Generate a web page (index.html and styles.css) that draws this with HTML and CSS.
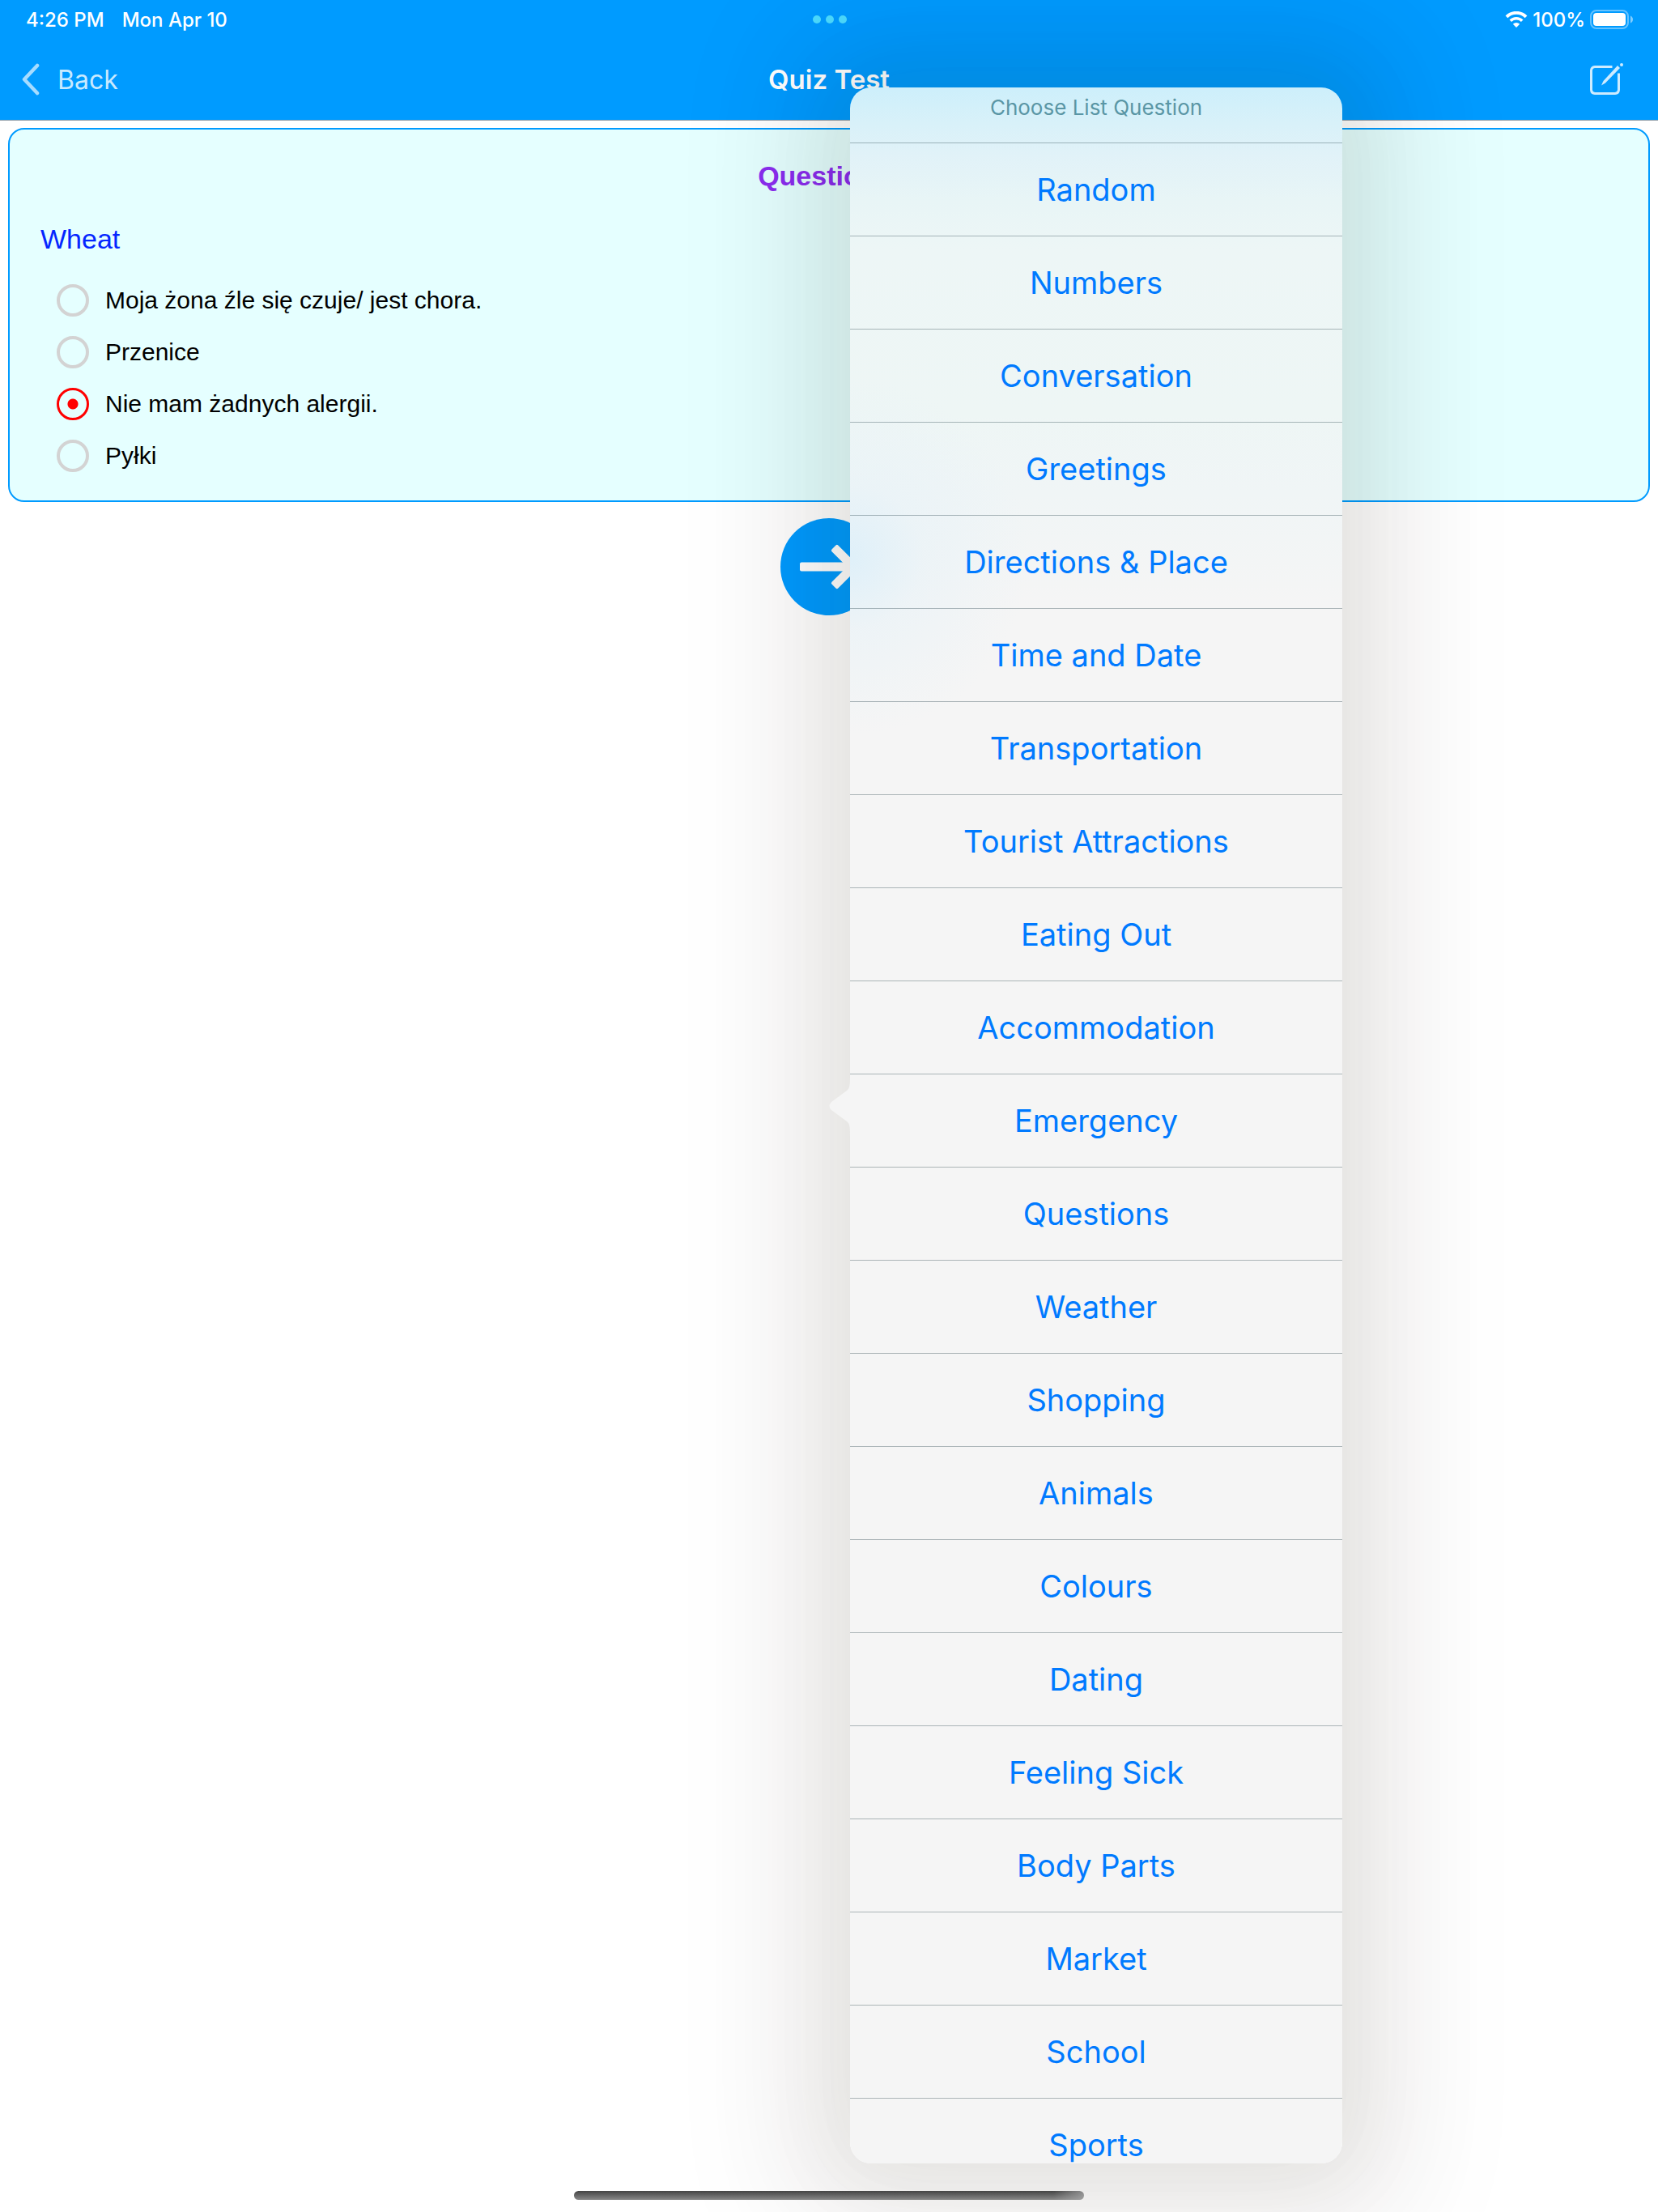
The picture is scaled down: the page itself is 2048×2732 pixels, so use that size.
FILE: index.html
```html
<!DOCTYPE html>
<html lang="en">
<head>
    <meta charset="UTF-8">
    <meta name="viewport" content="width=device-width, initial-scale=1.0">
    <title>Quiz Test</title>
    <link rel="stylesheet" href="styles.css">
</head>
<body>
<header class="header">
    <div class="status">
        <div class="status-left">
            <span>4:26 PM</span>
            <span>Mon Apr 10</span>
        </div>
        <div class="dots"><i></i><i></i><i></i></div>
        <div class="status-right">
            <svg class="wifi" viewBox="0 0 28 20" width="28" height="20">
                <path d="M2 6.8A17 17 0 0 1 26 6.8" fill="none" stroke="#fff" stroke-width="4"/>
                <path d="M6.8 11.8A10.2 10.2 0 0 1 21.2 11.8" fill="none" stroke="#fff" stroke-width="3.6"/>
                <path d="M14 20L9.8 15.8A6 6 0 0 1 18.2 15.8Z" fill="#fff"/>
            </svg>
            <span>100%</span>
            <svg class="battery" viewBox="0 0 54 24" width="54" height="24">
                <rect x="1" y="1" width="46" height="22" rx="7" fill="none" stroke="#fff" stroke-opacity=".4" stroke-width="2"/>
                <rect x="4" y="4" width="40" height="16" rx="4" fill="#fff"/>
                <path d="M50 7.5Q53 9 53 12T50 16.5Z" fill="#fff" fill-opacity=".5"/>
            </svg>
        </div>
    </div>
    <nav class="nav">
        <button class="back" type="button">
            <svg viewBox="0 0 24 40" width="24" height="40">
                <path d="M20 3L4 20L20 37" fill="none" stroke="#a6dcff" stroke-width="4.5" stroke-linecap="round" stroke-linejoin="round"/>
            </svg>
            Back
        </button>
        <h1>Quiz Test</h1>
        <button class="compose" type="button" aria-label="Choose list">
            <svg viewBox="0 0 44 44" width="44" height="44">
                <path d="M29.5 6.5H8A5 5 0 0 0 3.5 11V35A5 5 0 0 0 8 39.5H33A5 5 0 0 0 37.5 35V14.5" fill="none" stroke="#cdebff" stroke-width="3"/>
                <path d="M36 5L39 8L21 26.5L16 29.500L18.5 24Z" fill="#cdebff"/>
                <circle cx="41" cy="4" r="2" fill="#cdebff"/>
            </svg>
        </button>
    </nav>
</header>

<main class="main">
    <form class="card">
        <h2>Question 1</h2>
        <fieldset>
            <legend>Wheat</legend>
            <label><input type="radio" name="answer">Moja żona źle się czuje/ jest chora.</label>
            <label><input type="radio" name="answer">Przenice</label>
            <label><input type="radio" name="answer" checked>Nie mam żadnych alergii.</label>
            <label><input type="radio" name="answer">Pyłki</label>
        </fieldset>
    </form>
    <button class="next" type="button" aria-label="Next">
        <svg viewBox="0 0 120 120" width="120" height="120">
            <circle cx="60" cy="60" r="60" fill="#009bff"/>
            <g fill="#fff">
                <rect x="24" y="54.5" width="68" height="11" rx="2"/>
                <rect x="56" y="54.5" width="39.5" height="11" rx="2" transform="rotate(45 90 60)"/>
                <rect x="56" y="54.5" width="39.5" height="11" rx="2" transform="rotate(-45 90 60)"/>
            </g>
        </svg>
    </button>
</main>

<div class="popover">
    <svg class="arrow" viewBox="0 0 26 80" width="26" height="80">
        <path d="M26 0C26 13 26 18 22 21L3 35Q-2 40 3 45L22 59C26 62 26 67 26 80Z" fill="#f5f5f5"/>
    </svg>
    <div class="sheet">
        <p>Choose List Question</p>
        <ul>
            <li><button type="button">Random</button></li>
            <li><button type="button">Numbers</button></li>
            <li><button type="button">Conversation</button></li>
            <li><button type="button">Greetings</button></li>
            <li><button type="button">Directions &amp; Place</button></li>
            <li><button type="button">Time and Date</button></li>
            <li><button type="button">Transportation</button></li>
            <li><button type="button">Tourist Attractions</button></li>
            <li><button type="button">Eating Out</button></li>
            <li><button type="button">Accommodation</button></li>
            <li><button type="button">Emergency</button></li>
            <li><button type="button">Questions</button></li>
            <li><button type="button">Weather</button></li>
            <li><button type="button">Shopping</button></li>
            <li><button type="button">Animals</button></li>
            <li><button type="button">Colours</button></li>
            <li><button type="button">Dating</button></li>
            <li><button type="button">Feeling Sick</button></li>
            <li><button type="button">Body Parts</button></li>
            <li><button type="button">Market</button></li>
            <li><button type="button">School</button></li>
            <li><button type="button">Sports</button></li>
        </ul>
    </div>
</div>
<div class="home"></div>
</body>
</html>
```
FILE: styles.css
```css
* {
    margin: 0;
    padding: 0;
    box-sizing: border-box;
}

body {
    min-height: 100vh;
    background: #fff;
    font-family: Inter, sans-serif;
    position: relative;
    overflow: hidden;
}

button {
    border: none;
    background: none;
    font: inherit;
    cursor: pointer;
}

svg {
    display: block;
}

/* top bar */
.header {
    background: #009bff;
    border-bottom: 1px solid #8f9da8;
    color: #fff;
}

.status,
.nav {
    display: grid;
    grid-template-columns: 1fr auto 1fr;
    align-items: center;
}

.status {
    height: 48px;
    padding: 0 30px 0 32px;
    font-size: 24px;
    font-weight: 500;
}

.status-left {
    display: flex;
    gap: 22px;
}

.status-right {
    display: flex;
    align-items: center;
    justify-content: flex-end;
    gap: 6px;
}

.dots {
    display: flex;
    gap: 6px;
}

.dots i {
    width: 10px;
    height: 10px;
    border-radius: 50%;
    background: #4ddcff;
}

.nav {
    height: 100px;
    padding: 0 26px;
    font-size: 32px;
}

.nav h1 {
    font-size: 33px;
    font-weight: 600;
}

.back {
    display: flex;
    align-items: center;
    gap: 21px;
    color: #c8eaff;
}

.compose {
    justify-self: end;
    margin-right: 16px;
}

/* question */
.main {
    padding: 9px 10px;
    font-family: "Liberation Sans", Arial, sans-serif;
}

.card {
    padding: 37px 38px 23px;
    border: 2px solid #009bff;
    border-radius: 20px;
    background: #e5ffff;
}

.card h2 {
    color: #8b2df0;
    font-size: 34px;
    line-height: 40px;
    text-align: center;
}

.card fieldset {
    border: none;
    padding-top: 38px;
}

.card legend {
    float: left;
    width: 100%;
    margin-bottom: 24px;
    color: #0526ff;
    font-size: 34px;
    line-height: 40px;
}

.card label {
    clear: both;
    display: flex;
    align-items: center;
    gap: 20px;
    height: 64px;
    padding-left: 20px;
    font-size: 30px;
    color: #000;
}

.card input {
    appearance: none;
    width: 40px;
    height: 40px;
    border: 4px solid #d3d3d3;
    border-radius: 50%;
}

.card input:checked {
    border: 3px solid #f00;
    background: radial-gradient(circle, #f00 6px, transparent 7px);
}

.next {
    display: block;
    margin: 20px auto 0;
    border-radius: 50%;
}

/* question list */
.popover {
    position: absolute;
    top: 108px;
    bottom: 60px;
    left: calc(50% + 26px);
    width: 608px;
    border-radius: 26px;
    box-shadow:
        0 0 100px 20px rgba(40, 34, 10, 0.05),
        0 0 140px 60px rgba(40, 34, 10, 0.05),
        0 0 160px 100px rgba(40, 34, 10, 0.04);
}

.arrow {
    position: absolute;
    top: calc(50% - 64px);
    right: 100%;
}

.sheet {
    height: 100%;
    overflow: hidden;
    border-radius: 26px;
    background:
        radial-gradient(circle at 0 580px, #dff0f9, rgba(230, 242, 248, 0.5) 90px, rgba(240, 245, 247, 0) 220px),
        linear-gradient(#cdeffb, #d8f1f9 44px, #e1f2f8 84px, #e8f5f6 140px, #edf6f6 200px, #eef6f5 400px, #f0f5f6 500px, #f5f5f5 640px);
    text-align: center;
}

.sheet p {
    height: 68px;
    padding-top: 9px;
    color: #5a96a5;
    font-size: 26px;
    line-height: 32px;
}

.sheet ul {
    list-style: none;
}

.sheet li {
    border-top: 1px solid rgba(0, 30, 40, 0.3);
}

.sheet button {
    display: block;
    width: 100%;
    height: 114px;
    color: #007aff;
    font-size: 38px;
}

.home {
    position: absolute;
    bottom: 15px;
    left: 50%;
    width: 630px;
    height: 11px;
    margin-left: -315px;
    border-radius: 6px;
    background: linear-gradient(to right, transparent 94%, rgba(170, 170, 170, 0.7)), linear-gradient(#444, #888);
}
```
